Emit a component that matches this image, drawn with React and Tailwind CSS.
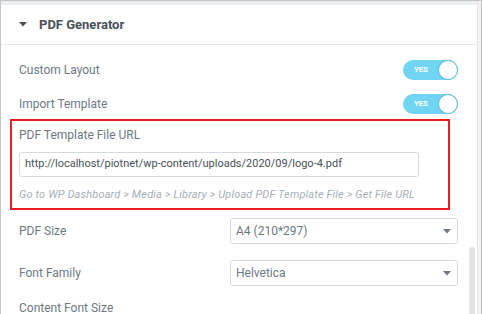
import React from "react";

function Toggle() {
  return (
    <div className="relative w-[55px] h-[20px] rounded-full bg-[#71d4f2] flex items-center">
      <span className="ml-[11px] text-[8px] leading-none font-bold text-white tracking-[-0.2px]">YES</span>
      <span className="absolute right-0 top-0 w-[20px] h-[20px] rounded-full bg-white border border-[#5cc3e5] shadow-[0_0_1px_rgba(0,0,0,0.2)]" />
    </div>
  );
}

function Caret({ className }) {
  return (
    <svg width="8" height="5" viewBox="0 0 8 5" className={className}>
      <path d="M0 0 L8 0 L4 4.5 Z" fill="currentColor" />
    </svg>
  );
}

function Select({ value }) {
  return (
    <div className="w-[228px] h-[26px] border border-[#d5dadf] rounded-[3px] flex items-center pl-[5px] pr-[6px] text-[12px] text-[#6d7882]">
      <span className="flex-1">{value}</span>
      <Caret className="text-[#6d7882]" />
    </div>
  );
}

export default function App() {
  return (
    <div
      className="w-[482px] h-[314px] overflow-hidden flex bg-white border-l border-t border-[#c4c4c4]"
      style={{ fontFamily: "Roboto, 'Liberation Sans', sans-serif" }}
    >
      <div className="w-[476px] flex flex-col">
        <div className="h-[4px] bg-[#eceff1] shrink-0" />
        <div className="h-[40px] shrink-0 border-b border-[#e6e9ec] flex items-center pl-[18px]">
          <Caret className="text-[#495157]" />
          <span className="ml-[12px] text-[13px] font-bold text-[#495157]">PDF Generator</span>
        </div>
        <div className="flex flex-1">
          <div className="w-[466px] shrink-0 flex flex-col text-[12px] text-[#6d7882]">
            <div className="mt-[15px] h-[20px] flex items-center pl-[18px] pr-[9px]">
              <span className="flex-1">Custom Layout</span>
              <Toggle />
            </div>
            <div className="mt-[14px] h-[20px] flex items-center pl-[18px] pr-[9px]">
              <span className="flex-1">Import Template</span>
              <Toggle />
            </div>
            <div className="mt-[5px] ml-[9px] w-[440px] border-2 border-[#ec1c24] pl-[7px] pt-[7px] pb-[7px]">
              <div className="leading-[15px]">PDF Template File URL</div>
              <div className="mt-[9px] w-[400px] h-[25px] border border-[#d5dadf] rounded-[3px] flex items-center pl-[5px] text-[11px] text-[#495157]">
                http://localhost/piotnet/wp-content/uploads/2020/09/logo-4.pdf
              </div>
              <div className="mt-[11px] leading-[13px] text-[11px] tracking-[0.15px] italic text-[#a4afb7] whitespace-nowrap">
                Go to WP Dashboard &gt; Media &gt; Library &gt; Upload PDF Template File &gt; Get File URL
              </div>
            </div>
            <div className="mt-[8px] flex items-center pl-[18px] pr-[9px]">
              <span className="flex-1">PDF Size</span>
              <Select value="A4 (210*297)" />
            </div>
            <div className="mt-[16px] flex items-center pl-[18px] pr-[9px]">
              <span className="flex-1">Font Family</span>
              <Select value="Helvetica" />
            </div>
            <div className="mt-[15px] pl-[18px] leading-[14px] whitespace-nowrap">Content Font Size</div>
          </div>
          <div className="w-[10px] shrink-0">
            <div className="mt-[202px] ml-[2px] w-[6px] h-[80px] rounded-t-full bg-[#e3e3e3]" />
          </div>
        </div>
      </div>
      <div className="w-[1px] bg-[#e2e4e6]" />
      <div className="w-[3px] bg-[#f3f3f3]" />
      <div className="w-[1px] bg-[#bdbdbd]" />
    </div>
  );
}
